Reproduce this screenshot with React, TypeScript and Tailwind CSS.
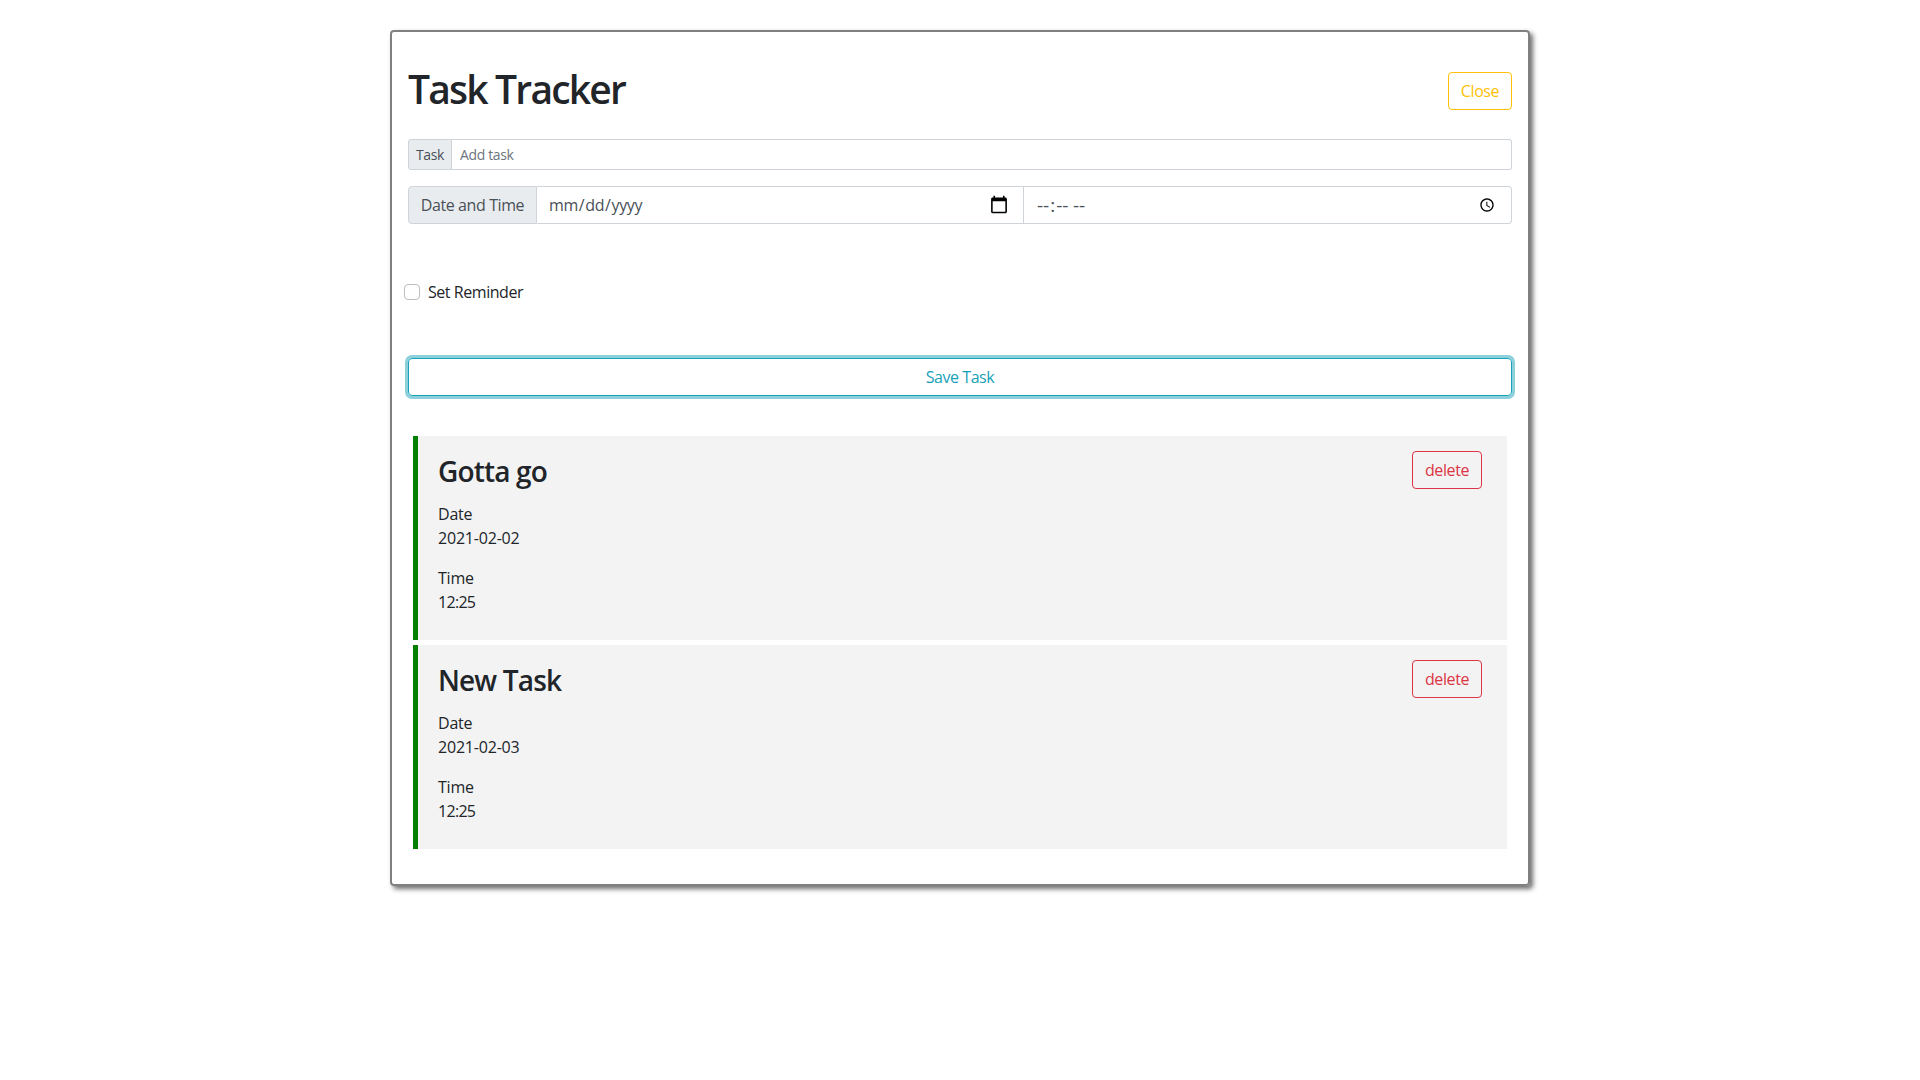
const tasks = [
  { title: "Gotta go", date: "2021-02-02", time: "12:25" },
  { title: "New Task", date: "2021-02-03", time: "12:25" },
];

export default function App() {
  return (
    <div className="min-h-[1080px] bg-white font-['Open_Sans','Noto_Sans',sans-serif] text-[#212529]">
      <div className="mx-auto w-[1140px] pt-[30px]">
        <div className="h-[856px] rounded-[4px] border-2 border-[#808080] px-4 pt-[35px] shadow-[3px_3px_5px_#6f6f6f]">
          <div className="flex h-[48px] items-center justify-between">
            <h1 className="-mt-[4px] text-[39px] leading-[48px] font-semibold tracking-[-1.8px]">Task Tracker</h1>
            <button
              type="button"
              className="h-[38px] w-[64px] rounded-[4px] border border-[#ffc107] text-[16px] tracking-[-0.4px] text-[#ffc107]"
            >
              Close
            </button>
          </div>

          <div className="mt-6 flex h-[31px] text-[14px] tracking-[-0.35px]">
            <span className="flex w-[44px] items-center justify-center rounded-l-[3px] border border-[#ced4da] bg-[#e9ecef] text-[#495057]">
              Task
            </span>
            <input
              type="text"
              placeholder="Add task"
              className="min-w-0 flex-1 rounded-r-[3px] border border-l-0 border-[#ced4da] px-2 text-[#495057] placeholder:text-[#6c757d]"
            />
          </div>

          <div className="mt-4 flex h-[38px] text-[16px] tracking-[-0.4px] text-[#495057]">
            <span className="flex w-[129px] items-center justify-center rounded-l-[4px] border border-[#ced4da] bg-[#e9ecef]">
              Date and Time
            </span>
            <input
              type="date"
              className="w-[487px] border border-l-0 border-[#ced4da] pr-3 pl-[11px] [&::-webkit-calendar-picker-indicator]:h-[20px] [&::-webkit-calendar-picker-indicator]:w-[20px]"
            />
            <input
              type="time"
              className="min-w-0 flex-1 rounded-r-[4px] border border-l-0 border-[#ced4da] px-3 [&::-webkit-datetime-edit]:text-[19px]"
            />
          </div>

          <label className="mt-14 -ml-1 flex h-6 items-center gap-2 text-[16px] tracking-[-0.45px]">
            <input
              type="checkbox"
              className="h-4 w-4 appearance-none rounded-[4px] border border-[#bfbfbf] bg-white"
            />
            <span className="-mt-[1px]">Set Reminder</span>
          </label>

          <button
            type="button"
            className="mt-[54px] h-[38px] w-full rounded-[4px] border border-[#17a2b8] text-[16px] tracking-[-0.45px] text-[#17a2b8] shadow-[0_0_0_3px_rgba(23,162,184,0.5)]"
          >
            Save Task
          </button>

          <div className="mt-[40px] flex flex-col gap-[5px] px-[5px]">
            {tasks.map((task) => (
              <div
                key={task.title}
                className="h-[204px] border-l-[5px] border-[#008000] bg-[#f3f3f3] pt-[15px] pr-[25px] pl-[20px] text-[16px] tracking-[-0.2px]"
              >
                <div className="flex h-[51px] items-start justify-between">
                  <h3 className="pt-[3px] text-[28px] leading-[34px] font-semibold tracking-[-0.85px]">{task.title}</h3>
                  <button
                    type="button"
                    className="h-[38px] w-[70px] rounded-[4px] border border-[#dc3545] tracking-[-0.4px] text-[#dc3545]"
                  >
                    delete
                  </button>
                </div>
                <p className="leading-6">Date</p>
                <p className="leading-6">{task.date}</p>
                <p className="mt-4 leading-6">Time</p>
                <p className="leading-6 tracking-[-0.7px]">{task.time}</p>
              </div>
            ))}
          </div>
        </div>
      </div>
    </div>
  );
}
